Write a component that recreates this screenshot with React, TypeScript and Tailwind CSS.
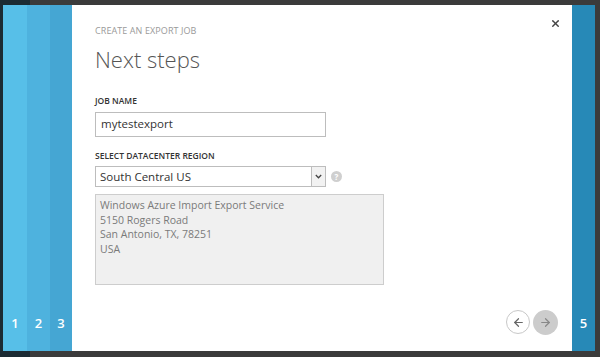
import { ArrowLeft, ArrowRight, X } from 'lucide-react';

export default function App() {
  return (
    <div className="w-[600px] h-[357px] bg-[#3b3b3b] flex flex-col overflow-hidden font-['Open_Sans',sans-serif]">
      {/* top strip */}
      <div className="h-[5px] flex">
        <div className="w-[30px] bg-[#1c2b33]" />
      </div>

      {/* main row */}
      <div className="flex-1 flex">
        <div className="w-[3px] bg-[#1c2b33]" />
        <div className="w-[24px] bg-[#57bfe8] flex items-end justify-center pb-[21px]">
          <span className="text-white text-[13px] font-semibold leading-none">1</span>
        </div>
        <div className="w-[23px] bg-[#4eb2de] flex items-end justify-center pb-[21px]">
          <span className="text-white text-[13px] font-semibold leading-none">2</span>
        </div>
        <div className="w-[22px] bg-[#45a6d3] flex items-end justify-center pb-[21px]">
          <span className="text-white text-[13px] font-semibold leading-none">3</span>
        </div>

        {/* dialog */}
        <div className="flex-1 bg-white relative pl-[23px] pt-[21px] flex flex-col">
          <button className="absolute top-[13px] right-[11px] text-[#444]">
            <X size={11} strokeWidth={3} />
          </button>

          <div className="text-[9px] text-[#9a9a9a] tracking-[0.01em] leading-none">CREATE AN EXPORT JOB</div>
          <div className="text-[22px] text-[#555] font-light leading-none mt-[13px]">Next steps</div>

          <div className="text-[8.5px] text-[#333] font-semibold leading-none mt-[27px]">JOB NAME</div>
          <div className="mt-[6px] w-[231px] h-[25px] border border-[#bdbdbd] flex items-center px-[5px] text-[11.5px] text-[#333]">
            mytestexport
          </div>

          <div className="text-[8.5px] text-[#333] font-semibold leading-none mt-[15px]">SELECT DATACENTER REGION</div>
          <div className="mt-[6px] flex items-center gap-[5px]">
            <div className="w-[231px] h-[21px] border border-[#bdbdbd] flex items-stretch">
              <div className="flex-1 flex items-center px-[4px] text-[11.5px] text-[#333]">South Central US</div>
              <div className="w-[14px] border-l border-[#bdbdbd] bg-[#f2f2f2] flex items-center justify-center">
                <svg width="7" height="5" viewBox="0 0 7 5">
                  <path d="M0.8 1 L3.5 3.8 L6.2 1" fill="none" stroke="#444" strokeWidth="1.3" />
                </svg>
              </div>
            </div>
            <div className="w-[11px] h-[11px] rounded-full bg-[#cfcfcf] text-white text-[8px] font-bold flex items-center justify-center leading-none">?</div>
          </div>

          <div className="mt-[7px] w-[289px] h-[91px] bg-[#f0f0f0] border border-[#cdcdcd] px-[4px] pt-[3px] text-[10.5px] leading-[14.5px] text-[#7a7a7a]">
            <div>Windows Azure Import Export Service</div>
            <div>5150 Rogers Road</div>
            <div>San Antonio, TX, 78251</div>
            <div>USA</div>
          </div>

          <div className="absolute right-[14px] bottom-[16px] flex gap-[3px]">
            <div className="w-[24px] h-[24px] rounded-full border border-[#c8c8c8] bg-white flex items-center justify-center text-[#666]">
              <ArrowLeft size={13} strokeWidth={2.2} />
            </div>
            <div className="w-[25px] h-[25px] rounded-full bg-[#cccccc] flex items-center justify-center text-[#888]">
              <ArrowRight size={13} strokeWidth={2.2} />
            </div>
          </div>
        </div>

        <div className="w-[23px] bg-[#2789b7] flex items-end justify-center pb-[21px]">
          <span className="text-white text-[13px] font-semibold leading-none">5</span>
        </div>
        <div className="w-[5px]" />
      </div>

      {/* bottom strip */}
      <div className="h-[6px] flex">
        <div className="w-[30px] bg-[#1c2b33]" />
      </div>
    </div>
  );
}
